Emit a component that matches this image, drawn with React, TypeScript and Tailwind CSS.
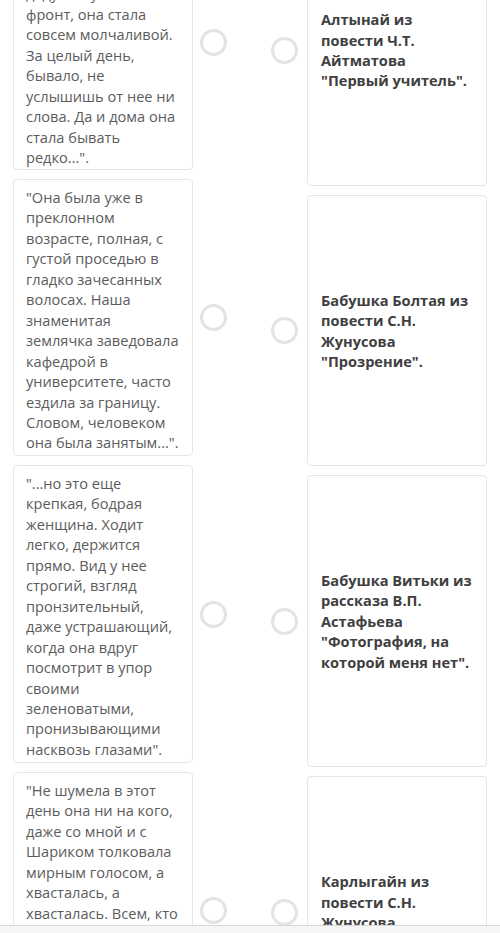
import React from "react";

const leftCards: { h: number; lines: string[] }[] = [
  {
    h: 254,
    lines: [
      "\"После того, как",
      "ее сын и зять,",
      "а за ними и",
      "дедушка ушел на",
      "фронт, она стала",
      "совсем молчаливой.",
      "За целый день,",
      "бывало, не",
      "услышишь от нее ни",
      "слова. Да и дома она",
      "стала бывать",
      "редко...\".",
    ],
  },
  {
    h: 277,
    lines: [
      "\"Она была уже в",
      "преклонном",
      "возрасте, полная, с",
      "густой проседью в",
      "гладко зачесанных",
      "волосах. Наша",
      "знаменитая",
      "землячка заведовала",
      "кафедрой в",
      "университете, часто",
      "ездила за границу.",
      "Словом, человеком",
      "она была занятым...\".",
    ],
  },
  {
    h: 298,
    lines: [
      "\"...но это еще",
      "крепкая, бодрая",
      "женщина. Ходит",
      "легко, держится",
      "прямо. Вид у нее",
      "строгий, взгляд",
      "пронзительный,",
      "даже устрашающий,",
      "когда она вдруг",
      "посмотрит в упор",
      "своими",
      "зеленоватыми,",
      "пронизывающими",
      "насквозь глазами\".",
    ],
  },
  {
    h: 277,
    lines: [
      "\"Не шумела в этот",
      "день она ни на кого,",
      "даже со мной и с",
      "Шариком толковала",
      "мирным голосом, а",
      "хвасталась, а",
      "хвасталась. Всем, кто",
      "заходил к нам, она",
      "рассказывала, что",
      "ее внук учится",
      "в городе...\".",
    ],
  },
];

const rightCards: { h: number; lines: string[] }[] = [
  { h: 272, lines: ["Алтынай из", "повести Ч.Т.", "Айтматова", "\"Первый учитель\"."] },
  { h: 271, lines: ["Бабушка Болтая из", "повести С.Н.", "Жунусова", "\"Прозрение\"."] },
  {
    h: 292,
    lines: ["Бабушка Витьки из", "рассказа В.П.", "Астафьева", "\"Фотография, на", "которой меня нет\"."],
  },
  { h: 272, lines: ["Карлыгайн из", "повести С.Н.", "Жунусова", "\"Прозрение\"."] },
];

function Circle() {
  return (
    <div className="w-[27px] h-[27px] shrink-0 rounded-full border-[3px] border-[#e3e3e3] bg-white" />
  );
}

export default function App() {
  return (
    <div
      className="w-[500px] h-[933px] overflow-hidden bg-white flex flex-col"
      style={{ fontFamily: "'Open Sans', 'Noto Sans', sans-serif" }}
    >
      <div className="flex-1 overflow-hidden">
        <div className="flex items-start">
          <div className="flex flex-col gap-[9px] pl-[13px] mt-[-86px]">
            {leftCards.map((c, i) => (
              <div key={i} className="flex items-center gap-[7px]">
                <div
                  className="w-[180px] shrink-0 border border-[#e5e5e5] rounded-[4px] bg-white pl-[12px] pt-[7px] text-[14.6px] leading-[20.45px] text-[#5c5c5c]"
                  style={{ height: i === 0 ? c.h + 2 : c.h }}
                >
                  {c.lines.map((l, j) => (
                    <div key={j} className="whitespace-nowrap">
                      {l}
                    </div>
                  ))}
                </div>
                <Circle />
              </div>
            ))}
          </div>
          <div className="flex flex-col gap-[9px] ml-[44px] mt-[-86px]">
            {rightCards.map((c, i) => (
              <div key={i} className="flex items-center gap-[9px]">
                <Circle />
                <div
                  className="w-[180px] shrink-0 border border-[#e5e5e5] rounded-[4px] bg-white pl-[13px] flex flex-col justify-center text-[14.6px] leading-[20.45px] font-bold text-[#404040]"
                  style={{ height: c.h }}
                >
                  {c.lines.map((l, j) => (
                    <div key={j} className="whitespace-nowrap">
                      {l}
                    </div>
                  ))}
                </div>
              </div>
            ))}
          </div>
        </div>
      </div>
      <div className="h-[8px] shrink-0 border-t border-[#d8d8d8] bg-[#f6f6f6]" />
    </div>
  );
}
